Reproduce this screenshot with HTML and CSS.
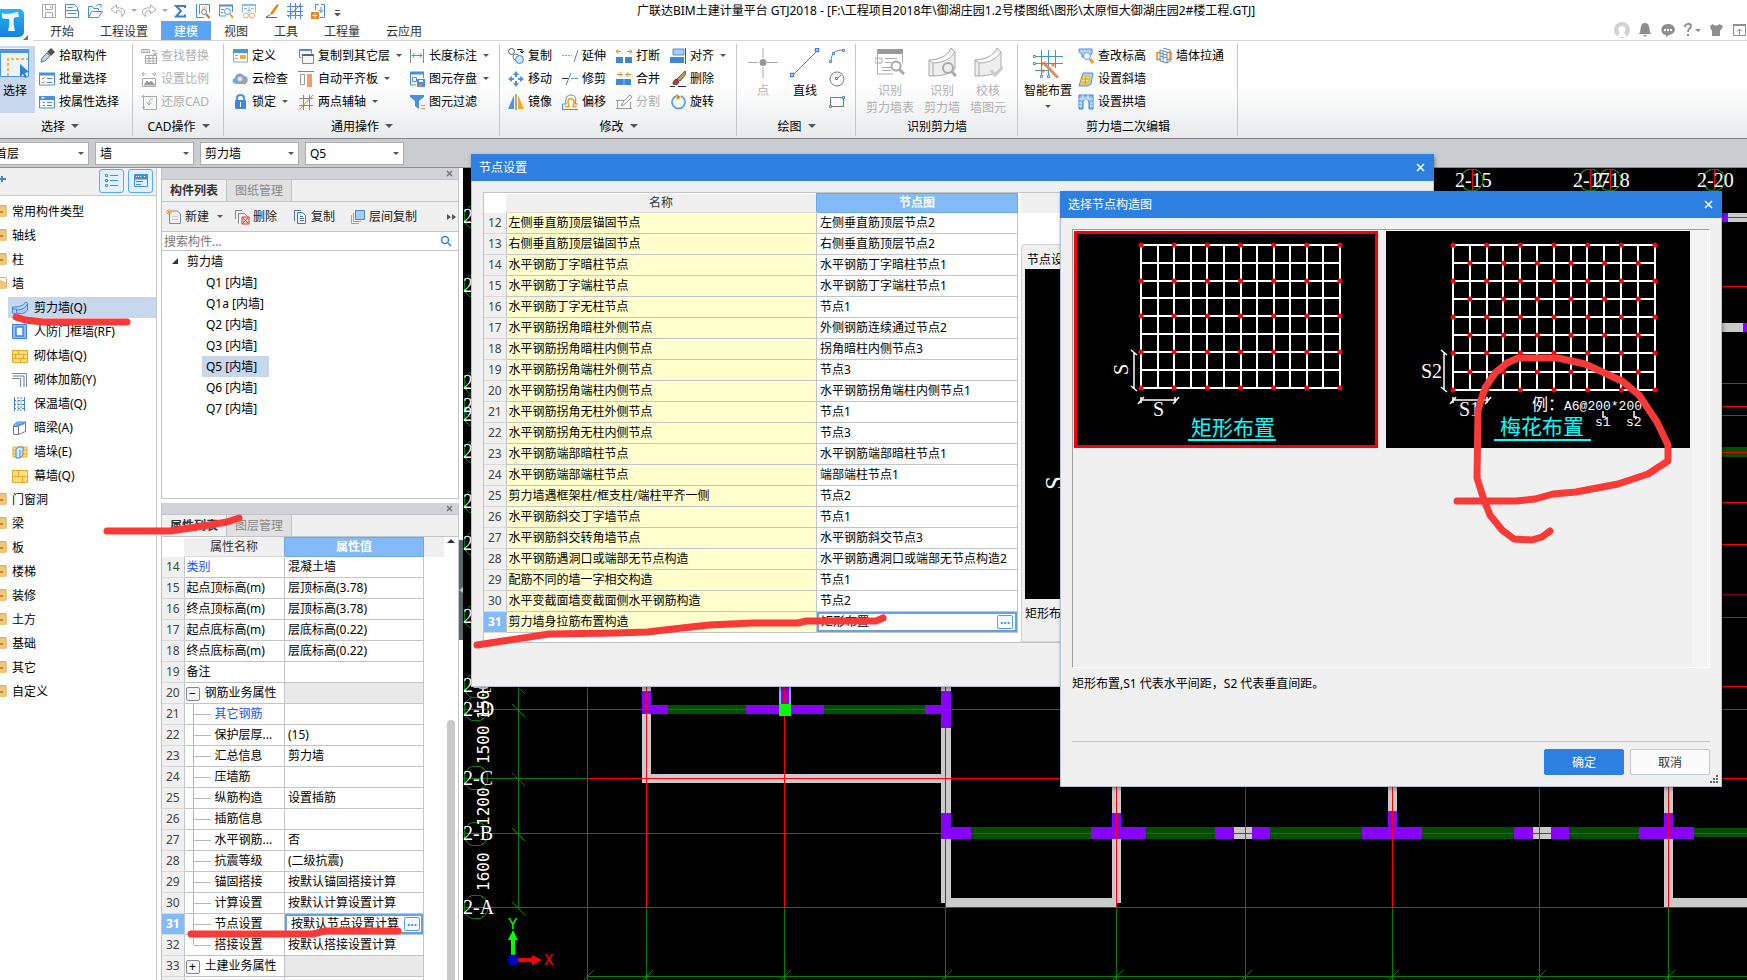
FILE: index.html
```html
<!DOCTYPE html>
<html lang="zh-CN">
<head>
  <meta charset="UTF-8">
  <title>广联达BIM土建计量平台 GTJ2018</title>
  <meta name="viewport" content="width=device-width, initial-scale=1.0">
  <link rel="stylesheet" href="styles.css">
</head>
<body>
<div class="app">

  <header class="titlebar">
    <div class="logo">
      <svg width="33" height="41" viewBox="0 0 33 41">
        <defs><linearGradient id="lg" x1="0" y1="0" x2="0" y2="1"><stop offset="0" stop-color="#27b4f5"/><stop offset="1" stop-color="#1580dd"/></linearGradient></defs>
        <rect x="-6" y="9" width="30" height="28" rx="5" fill="url(#lg)"/>
        <path d="M2 13c4 2 11 0 16-1l1 5c-2 0-4 0-5 1-1 4 0 8 1 13H8c1-5 2-9 1-12-2 0-5 0-7-1z" fill="#e9f7ff"/>
        <path d="M28 35v5h-5z" fill="#777"/>
      </svg>
    </div>
    <div class="title-main">
      <div class="title-row">
        <div class="quick">
          <button aria-label="保存"><svg width="16" height="16" viewBox="0 0 16 16" fill="none" stroke="#aaa"><path d="M1.500 1.500h13v13h-13zM4.500 1.500v5h7v-5M4.500 14.500v-5h7v5M9.500 3v2"/></svg></button>
          <button aria-label="另存"><svg width="16" height="16" viewBox="0 0 16 16" fill="none" stroke="#4a8fdc"><path d="M1.500 7V1.500h9l3 3V7M3.500 4.500h5M1.500 14.500v-7h13v7zM4 10.500h8"/></svg></button>
          <button aria-label="打开"><svg width="16" height="16" viewBox="0 0 16 16" fill="none" stroke="#4a8fdc"><path d="M1.500 14.500v-11h4l1 2h5v2M1.500 14.500l3-6h11l-4 6zM9 3.500l2-2h3v3"/></svg></button>
          <button aria-label="撤销" class="with-caret"><svg width="16" height="16" viewBox="0 0 16 16" fill="none" stroke="#aaa"><path d="M6.500 2L1 6.500l5.500 4V8c4-1 6 1 5 5.500C17 10 15 4 6.500 5z"/></svg><i class="caret light"></i></button>
          <button aria-label="恢复" class="with-caret"><svg width="16" height="16" viewBox="0 0 16 16" fill="none" stroke="#aaa"><path d="M9.500 2L15 6.500l-5.500 4V8c-4-1-6 1-5 5.500C-1 10 1 4 9.500 5z"/></svg><i class="caret light"></i></button>
          <button aria-label="汇总"><svg width="16" height="16" viewBox="0 0 16 16" fill="none" stroke="#3f7fd0" stroke-width="2"><path d="M13 5V3H4l5 5-5 5.500h9v-2"/></svg></button>
          <button aria-label="查量"><svg width="16" height="16" viewBox="0 0 16 16" fill="none" stroke="#4a8fdc"><path d="M1.500 1v13.500H9M4.500 11V1.500h10v8"/><path d="M7 4h6M7 6h6" stroke="#f08a3c" stroke-dasharray="1 1"/><circle cx="9" cy="9" r="2.500"/><path d="M11 11l3.500 4" stroke="#e07020" stroke-width="2"/></svg></button>
          <button aria-label="查看"><svg width="16" height="16" viewBox="0 0 16 16" fill="none" stroke="#4a8fdc"><path d="M1 2.500h14" stroke-width="2"/><path d="M1.500 2v11H8M14.500 3v6M3 6.500h3M3 9.500h2"/><circle cx="9.500" cy="8.500" r="3"/><path d="M12 11l3 4" stroke="#f0a020" stroke-width="2"/></svg></button>
          <button aria-label="云查"><svg width="16" height="16" viewBox="0 0 16 16" fill="none" stroke="#8db9e8"><path d="M1 2h14" stroke-width="2"/><path d="M1.500 2v8M14.500 3v7M3 5.500h3M10 5.500h3M8 4v6M6 7.500h4"/><g stroke="#f0a070"><circle cx="5" cy="12.500" r="2.500"/><circle cx="11" cy="12.500" r="2.500"/></g></svg></button>
          <button aria-label="画笔"><svg width="16" height="16" viewBox="0 0 16 16"><path d="M13 1l2 1-6 9-3 1 1-3z" fill="#f08020"/><path d="M2 14.500h11M2 14l4-2" stroke="#666"/></svg></button>
          <button aria-label="轴网"><svg width="16" height="16" viewBox="0 0 16 16" fill="none" stroke="#4a8fdc"><path d="M3.500 0v16M8.500 0v16M13.500 0v16M0 3.500h16M0 8.500h16M0 12.500h16M1 14L14 1"/></svg></button>
          <button aria-label="导入"><svg width="16" height="16" viewBox="0 0 16 16" fill="none" stroke="#4a8fdc"><path d="M5.500 7V1.500h3M11 1.500h3.500v13H10"/><path d="M11 4v5M9 7l2 2.500L13 7"/><path d="M1 9h8v7H1z" fill="#f08020" stroke="none"/><path d="M5 10v5M2.500 12.500h5" stroke="#fff"/></svg></button>
          <button aria-label="更多" class="more"><svg width="7" height="8" viewBox="0 0 7 8"><path d="M1 1.500h5" stroke="#555"/><path d="M0 4h7L3.500 7.500z" fill="#555"/></svg></button>
        </div>
        <h1 class="title">广联达BIM土建计量平台 GTJ2018 - [F:\工程项目2018年\御湖庄园1.2号楼图纸\图形\太原恒大御湖庄园2#楼工程.GTJ]</h1>
      </div>
      <div class="tab-row">
        <nav class="tabs">
          <a href="#">开始</a>
          <a href="#">工程设置</a>
          <a href="#" class="active">建模</a>
          <a href="#">视图</a>
          <a href="#">工具</a>
          <a href="#">工程量</a>
          <a href="#">云应用</a>
        </nav>
        <div class="user-icons">
          <svg width="16" height="16" viewBox="0 0 16 16"><circle cx="8" cy="8" r="8" fill="#d2d2d2"/><path d="M4 15c0-3 1-3 2-4-3-4-1-7 2-7s5 3 2 7c1 1 2 1 2 4z" fill="#fff"/></svg>
          <svg width="16" height="16" viewBox="0 0 16 16"><path d="M8 1c5 0 4 6 5 9l1 2H2l1-2C4 7 3 1 8 1zM6 13h4l-2 2z" fill="#8e8e8e"/></svg>
          <svg width="16" height="16" viewBox="0 0 16 16"><path d="M8 2c9 0 9 10 1 11l-3 2v-2C-1 12 0 2 8 2z" fill="#8e8e8e"/><path d="M4 7h2v2H4zM7 7h2v2H7zM10 7h2v2h-2z" fill="#fff"/></svg>
          <svg width="18" height="16" viewBox="0 0 18 16"><path d="M2 5c0-4 6-4 6-1 0 2-3 3-3 6" fill="none" stroke="#8e8e8e" stroke-width="2"/><path d="M4 12h2v2H4zM12 7h6l-3 3z" fill="#8e8e8e"/></svg>
          <svg width="16" height="16" viewBox="0 0 16 16"><path d="M2 4l3-2c1 2 5 2 6 0l4 2-2 4h-1v6H4V8H3z" fill="#8e8e8e"/></svg>
          <svg width="16" height="16" viewBox="0 0 16 16" fill="none" stroke="#8e8e8e"><path d="M2 3h13" stroke-width="2"/><path d="M2.500 3v10.500h12V3M8.500 13V7M6 9.500L8.500 7 11 9.500"/></svg>
        </div>
      </div>
    </div>
  </header>

  <div class="ribbon">
    <section class="group g-select">
      <div class="group-body">
        <button class="big active"><svg width="30" height="30" viewBox="0 0 30 30"><path d="M0 0h29v29H0z" fill="#eef3fb"/><path d="M0 1h29v4H0z" fill="#4a94e8"/><path d="M.5 1v27.500h28V1" fill="none" stroke="#4a94e8"/><path d="M8 28V11h20" fill="none" stroke="#f5b731" stroke-width="2" stroke-dasharray="3 2"/><path d="M20 16l9 8-4 1 2 4-2 1-2-4-3 3z" fill="#2f7fdc"/></svg>选择</button>
        <div class="tools">
          <button class="tool"><svg width="16" height="16" viewBox="0 0 16 16"><path d="M2 14l1-4 5-5 3 3-5 5z" fill="#bcd6f2" stroke="#777"/><path d="M8 4l4-4 4 4-4 4z" fill="#555"/></svg>拾取构件</button>
          <button class="tool"><svg width="16" height="16" viewBox="0 0 16 16" fill="none" stroke="#4a8fdc"><path d="M0 3h16" stroke-width="3"/><path d="M.5 3v11h15V3M8 7.500h5M8 11.500h5"/><path d="M3 7l1 1 2-2M3 11l1 1 2-2" stroke="#f08020"/></svg>批量选择</button>
          <button class="tool"><svg width="16" height="16" viewBox="0 0 16 16" fill="none" stroke="#4a8fdc"><path d="M0 4h16" stroke-width="4"/><path d="M.5 3v11h15V3M4 8.500h2M8 8.500h5M4 11.500h2M8 11.500h5"/><path d="M2 3h4L4 5z" fill="#fff" stroke="none"/></svg>按属性选择</button>
        </div>
      </div>
      <div class="group-label">选择<i class="caret wide"></i></div>
    </section>

    <section class="group g-cad">
      <div class="group-body tools">
        <button class="tool" disabled><svg width="16" height="16" viewBox="0 0 16 16" fill="none" stroke="#aaa"><path d="M.5 1.500h8v3h-8zM3 2v2M6 2v2M11 2.500h3V7M12 5l2 2 2-2M4.500 7.500h11v8h-11zM8 8v8M12 8v8M5 10.500h10M5 13h10"/></svg>查找替换</button>
        <button class="tool" disabled><svg width="16" height="16" viewBox="0 0 16 16" fill="none" stroke="#aaa"><path d="M1 3h4M3 1L1 3l2 2M15 3h-4M13 1l2 2-2 2M1.500 7.500h13v8h-13z"/><path d="M3 14l3-4 2 2 2-2 4 4z" fill="#999"/></svg>设置比例</button>
        <button class="tool" disabled><svg width="16" height="16" viewBox="0 0 16 16" fill="none" stroke="#aaa"><path d="M.5 2.500h15M2.500 1v14.500h13V2M1 13.500h3M12 5c-3 0-4 1-4 6M5.500 8.500L8 11l2.500-2.500"/></svg>还原CAD</button>
      </div>
      <div class="group-label">CAD操作<i class="caret wide"></i></div>
    </section>

    <section class="group g-common">
      <div class="group-body tools">
        <button class="tool"><svg width="16" height="16" viewBox="0 0 16 16" fill="none" stroke="#7fa8d6"><path d="M1.500 2v12h14V2"/><path d="M1 3h15" stroke="#4a94e8" stroke-width="4"/><path d="M3 7.500h3M3 10.500h3"/><path d="M8 7h6v4H8z" fill="#f6a93b" stroke="none"/></svg>定义</button>
        <button class="tool"><svg width="16" height="16" viewBox="0 0 16 16"><path d="M5 13c-5 0-6-5-2-6 0-5 7-6 9-2 5 0 5 8 0 8z" fill="#6ea9ea"/><circle cx="8" cy="8" r="2.500" fill="#dcecff" stroke="#f0a080"/><path d="M10 10l3 3" stroke="#f08a5c" stroke-width="2"/></svg>云检查</button>
        <button class="tool"><svg width="16" height="16" viewBox="0 0 16 16"><path d="M5 7V4c0-4 7-4 7 0v3" fill="none" stroke="#4a94e8" stroke-width="2"/><rect x="3" y="6" width="11" height="9" rx="1" fill="#3f86dd"/><path d="M8 8h1v5H8z" fill="#fff"/></svg>锁定<i class="caret"></i></button>
        <button class="tool"><svg width="16" height="16" viewBox="0 0 16 16" fill="none" stroke="#4a8fdc"><path d="M3.500 9.500h-2v-8h12v4M1 2.500h13"/><path d="M4.500 6.500h11v9h-11z" fill="#f4f4f4" stroke="#888"/><path d="M4 7h12" stroke="#666" stroke-width="2"/></svg>复制到其它层<i class="caret"></i></button>
        <button class="tool"><svg width="16" height="16" viewBox="0 0 16 16"><path d="M0 .5h16" stroke="#4a8fdc"/><path d="M2.500 3.500h4v10h-4z" fill="#fff" stroke="#999"/><path d="M9 3h5v13H9z" fill="#ff9a6b"/></svg>自动平齐板<i class="caret"></i></button>
        <button class="tool"><svg width="16" height="16" viewBox="0 0 16 16" fill="none" stroke="#888"><path d="M5.500 1v15M11.500 1v15M1 4.500h14M1 11.500h14"/><path d="M2 15L15 1" stroke="#e08040"/></svg>两点辅轴<i class="caret"></i></button>
        <button class="tool"><svg width="16" height="16" viewBox="0 0 16 16" fill="none"><path d="M1.500 1v14M14.500 1v14" stroke="#888"/><path d="M3 7.500h10M5.500 5L3 7.500 5.500 10M10.500 5L13 7.500 10.500 10" stroke="#4a8fdc"/></svg>长度标注<i class="caret"></i></button>
        <button class="tool"><svg width="16" height="16" viewBox="0 0 16 16" fill="none" stroke="#4a8fdc"><path d="M1 2h14" stroke-width="3"/><path d="M1.500 2v12H7M14.500 2v5M3.500 6.500h4v4h-4z"/><path d="M8 8h8v8H8z" fill="#4a8fdc" stroke="none"/><path d="M10 9h4v2h-4z" fill="#fff" stroke="none"/><path d="M10 13h3v3h-3z" fill="#f08020" stroke="none"/></svg>图元存盘<i class="caret"></i></button>
        <button class="tool"><svg width="16" height="16" viewBox="0 0 16 16"><path d="M1 1h14v2l-5 4v8l-4-3V7L1 3z" fill="#4a8fdc"/><path d="M12 11.500h4M12 14.500h4" stroke="#f08a3c"/></svg>图元过滤</button>
      </div>
      <div class="group-label">通用操作<i class="caret wide"></i></div>
    </section>

    <section class="group g-modify">
      <div class="group-body tools">
        <button class="tool"><svg width="16" height="16" viewBox="0 0 16 16" fill="none" stroke="#555"><circle cx="3.500" cy="3.500" r="3"/><circle cx="8" cy="9" r="3" stroke="#777"/><circle cx="11.500" cy="11.500" r="4" stroke="#3f86dd" fill="#cfe3fa"/><path d="M9 1.500h5V5M12 3l2 2 2-2" stroke="#222"/></svg>复制</button>
        <button class="tool"><svg width="16" height="16" viewBox="0 0 16 16" fill="#4a94e8"><path d="M8 0l3 4H5zM8 16l-3-4h6zM0 8l4-3v6zM16 8l-4 3V5z"/><path d="M7 4h2v2H7zM7 10h2v2H7zM4 7h2v2H4zM10 7h2v2h-2z"/></svg>移动</button>
        <button class="tool"><svg width="16" height="16" viewBox="0 0 16 16"><path d="M6 1v14H0z" fill="#4a94e8"/><path d="M10 1v14h6z" fill="#f6a91b"/><path d="M8 0v16" stroke="#555"/></svg>镜像</button>
        <button class="tool"><svg width="16" height="16" viewBox="0 0 16 16"><path d="M0 7.500h10" stroke="#8aa6c4" stroke-dasharray="2 1"/><path d="M16 2l-4 12" stroke="#3f86dd"/></svg>延伸</button>
        <button class="tool"><svg width="16" height="16" viewBox="0 0 16 16"><path d="M0 7.500h6" stroke="#333"/><path d="M9 7.500h7" stroke="#3f86dd" stroke-dasharray="3 1"/><path d="M9 2L4 14" stroke="#3f86dd"/></svg>修剪</button>
        <button class="tool"><svg width="16" height="16" viewBox="0 0 16 16" fill="none"><path d="M0 15.500h16M.5 15v-5H4C3 4 5 1 9 1s6 3 4 9h3" stroke="#4a8fdc"/><path d="M3 12.500h4c-2-5-1-8 2-8s4 3 2 8h4" stroke="#f0a020" stroke-width="1.500"/></svg>偏移</button>
        <button class="tool"><svg width="16" height="16" viewBox="0 0 16 16"><path d="M0 9h7v6H0zM9 9h7v6H9z" fill="#3f86dd"/><path d="M0 3.500h5M2.500 1L0 3.500 2.500 6M16 3.500h-5M13.500 1L16 3.500 13.500 6" fill="none" stroke="#e8821e"/></svg>打断</button>
        <button class="tool"><svg width="16" height="16" viewBox="0 0 16 16"><path d="M0 8h15v6H0z" fill="#3f86dd"/><path d="M8 8v6" stroke="#9cc4f3"/><path d="M1 3.500h5M3.500 1L6 3.500 3.500 6M15 3.500h-5M12.500 1L10 3.500 12.500 6" fill="none" stroke="#e8821e"/></svg>合并</button>
        <button class="tool" disabled><svg width="16" height="16" viewBox="0 0 16 16" fill="none" stroke="#999"><path d="M0 6.500h8M0 14.500h16M1.500 6v9M14.500 8v7M5 12l2-4 7-7 2 2-7 7z"/></svg>分割</button>
        <button class="tool"><svg width="16" height="16" viewBox="0 0 16 16"><path d="M3 1h11v6H3z" fill="#a9ccf5" stroke="#4a8fdc"/><path d="M0 9h14v6H0z" fill="#3f86dd"/><path d="M15.500 0v16" stroke="#555"/></svg>对齐<i class="caret"></i></button>
        <button class="tool"><svg width="16" height="16" viewBox="0 0 16 16"><path d="M15 0l1 3-6 7-3-2z" fill="#c79a62" stroke="#555"/><path d="M6 8l3 3c-1 3-4 3-6 2 0-2 1-4 3-5z" fill="#c0392b" stroke="#444"/><path d="M0 15.500h5M8 15.500h8" stroke="#333"/></svg>删除</button>
        <button class="tool"><svg width="16" height="16" viewBox="0 0 16 16"><path d="M6 2a6.500 6.500 0 1 0 5 0" fill="none" stroke="#4a94e8" stroke-width="1.500"/><path d="M6 0l5 3-4 3z" fill="#e8821e"/></svg>旋转</button>
      </div>
      <div class="group-label">修改<i class="caret wide"></i></div>
    </section>

    <section class="group g-draw">
      <div class="group-body">
        <button class="big" disabled><svg width="30" height="30" viewBox="0 0 30 30"><path d="M15 0v10M15 19v11M0 14.500h10M19 14.500h11" stroke="#aaa"/><circle cx="15" cy="14.500" r="3.500" fill="#999"/></svg>点</button>
        <button class="big"><svg width="30" height="30" viewBox="0 0 30 30" fill="#fff"><path d="M2 28L28 2" stroke="#777"/><path d="M.5 25.500h3v3h-3zM25.500.5h3v3h-3z" stroke="#3f86dd" stroke-width="1.500"/></svg>直线</button>
        <div class="tools">
          <button class="tool" aria-label="弧线"><svg width="16" height="16" viewBox="0 0 16 16" fill="none"><path d="M2 14C2 5 6 2 14 2" stroke="#777"/><path d="M.5 12.500h2v2h-2zM3.500 4.500h2v2h-2zM13.500 1.500h2v2h-2z" stroke="#3f86dd" fill="#fff"/></svg></button>
          <button class="tool" aria-label="圆"><svg width="16" height="16" viewBox="0 0 16 16" fill="none"><circle cx="8" cy="8" r="7" stroke="#777"/><path d="M8 8l4-4" stroke="#777"/><path d="M6.500 6.500h2v2h-2z" stroke="#3f86dd" fill="#fff"/></svg></button>
          <button class="tool" aria-label="矩形"><svg width="16" height="16" viewBox="0 0 16 16" fill="none"><path d="M1.500 3.500h13v9h-13z" stroke="#777"/><path d="M.5 11.500h2v2h-2zM13.500 2.500h2v2h-2z" stroke="#3f86dd" fill="#fff"/></svg></button>
        </div>
      </div>
      <div class="group-label">绘图<i class="caret wide"></i></div>
    </section>

    <section class="group g-identify">
      <div class="group-body">
        <button class="big" disabled><svg width="30" height="30" viewBox="0 0 30 30" fill="none" stroke="#aaa"><path d="M2 3.500h26" stroke="#999" stroke-width="5"/><path d="M2.500 3v23H18M27.500 3v12M0 10h7v5H0zM10 10.500h12M10 14.500h6M7 19.500h9M7 22.500h9"/><circle cx="21" cy="18" r="4.500" stroke-width="2"/><path d="M24 21l5 5" stroke-width="3"/></svg>识别<br>剪力墙表</button>
        <button class="big" disabled><svg width="30" height="30" viewBox="0 0 30 30" fill="#eee" stroke="#aaa"><path d="M2 12c9 0 18-3 22-12l4 4v17c-6 6-15 7-26 7zM2 12l4 3c8 0 17-3 22-11M6 15v13"/><circle cx="21" cy="20" r="5" stroke-width="2"/><path d="M24 23l5 5" stroke-width="3"/></svg>识别<br>剪力墙</button>
        <button class="big" disabled><svg width="30" height="30" viewBox="0 0 30 30" fill="#eee" stroke="#aaa"><path d="M2 12c9 0 18-3 22-12l4 4v17c-6 6-15 7-26 7zM2 12l4 3c8 0 17-3 22-11M6 15v13"/><path d="M18 22l4 5 8-8" fill="none" stroke="#ccc" stroke-width="3"/></svg>校核<br>墙图元</button>
      </div>
      <div class="group-label">识别剪力墙</div>
    </section>

    <section class="group g-wall">
      <div class="group-body">
        <button class="big"><svg width="30" height="30" viewBox="0 0 30 30" fill="none" stroke="#4a8fdc"><path d="M8.500 2v25M15.500 2v25M22.500 2v18M2 8.500h28M2 15.500h28M2 22.500h14"/><path d="M.5 7.500h2v2h-2zM.5 14.500h2v2h-2zM7.500 27.500h2v2h-2zM14.500 27.500h2v2h-2z" fill="#fff"/><path d="M12 16l13 14" stroke="#d9935a" stroke-width="3"/><path d="M8 13l5 5M13 13l-5 5M20 15v4M18 17h4M10 21v4M8 23h4" stroke="#ee6a2a"/></svg>智能布置<i class="caret"></i></button>
        <div class="tools">
          <button class="tool"><svg width="16" height="16" viewBox="0 0 16 16"><path d="M1 1h13v5l-4 3H4V6L1 4z" fill="#b5d3f6" stroke="#4a8fdc"/><circle cx="9" cy="8" r="3.500" fill="#eaf3ff" stroke="#6ea0d8"/><path d="M12 11l3 4" stroke="#f0a020" stroke-width="3"/></svg>查改标高</button>
          <button class="tool"><svg width="16" height="16" viewBox="0 0 16 16"><path d="M5 2h10l-2 11-3 2H1z" fill="#b5d3f6" stroke="#4a8fdc"/><path d="M5 5h7l-2 8H2z" fill="#ffe48a" stroke="#f0b020"/><path d="M4 8h7M3 11h7M8 5l-1 8" stroke="#d89a10"/></svg>设置斜墙</button>
          <button class="tool"><svg width="16" height="16" viewBox="0 0 16 16"><path d="M1 1h14v14h-4V9c0-5-6-5-6 0v6H1z" fill="#8dbdf2" stroke="#3f86dd"/><path d="M1 5h14M1 9h3M12 9h3M1 12h3M12 12h3M5 1v4M10 1v4" stroke="#e8f2ff"/></svg>设置拱墙</button>
          <button class="tool"><svg width="16" height="16" viewBox="0 0 16 16" fill="none" stroke="#4a8fdc"><path d="M4 2l7 2v11l-7-2zM7 0l7 2v11l-3 2M4 5l7 2M4 8l7 2M7 3v11"/><path d="M5 4.500H1v7h4M11 4.500h4v7h-4" stroke="#f08020" stroke-width="1.500"/></svg>墙体拉通</button>
        </div>
      </div>
      <div class="group-label">剪力墙二次编辑</div>
    </section>
  </div>

  <div class="filters">
    <span class="combo"><select aria-label="楼层"><option>首层</option></select><i class="caret"></i></span>
    <span class="combo"><select aria-label="构件大类"><option>墙</option></select><i class="caret"></i></span>
    <span class="combo"><select aria-label="构件类型"><option>剪力墙</option></select><i class="caret"></i></span>
    <span class="combo"><select aria-label="构件"><option>Q5</option></select><i class="caret"></i></span>
  </div>

  <main class="workspace">
    <aside class="navigator">
      <div class="nav-bar">
        <svg class="plus" width="6" height="8" viewBox="0 0 6 8"><path d="M0 4h6M2 1v6" stroke="#3f86dd" stroke-width="2"/></svg>
        <button aria-label="列表"><svg width="16" height="16" viewBox="0 0 16 16" fill="none" stroke="#3f8fe8"><path d="M1.500 1.500h2v2h-2zM1.500 6.500h2v2h-2zM1.500 11.500h2v2h-2zM6 2.500h8M6 7.500h8M6 12.500h8"/></svg></button>
        <button aria-label="窗口"><svg width="16" height="16" viewBox="0 0 16 16" fill="none" stroke="#3f8fe8"><path d="M1.500 1.500h13v12h-13z"/><path d="M1 4h14" stroke-width="5"/><path d="M3 3.500h5M11 3.500h2" stroke="#fff" stroke-dasharray="1 1"/><path d="M3 8.500h7M3 11.500h5"/></svg></button>
      </div>
      <ul class="nav-list">
        <li><a href="#"><i class="folder"></i>常用构件类型</a></li>
        <li><a href="#"><i class="folder"></i>轴线</a></li>
        <li><a href="#"><i class="folder"></i>柱</a></li>
        <li><a href="#"><i class="folder open"></i>墙</a>
          <ul>
            <li><a href="#" class="active"><svg width="16" height="16" viewBox="0 0 16 16" fill="#a8cdf5" stroke="#3f86dd"><path d="M.5 7c6 0 11-1 13-5l2 1v7c-3 4-6 4-11 3v-4L.5 9zM.5 7v6l4 1M4.500 10c5 0 9-2 11-6"/></svg>剪力墙(Q)</a></li>
            <li><a href="#"><svg width="16" height="16" viewBox="0 0 16 16"><path d="M.5.5h14v14H.500z" fill="#8dbdf2" stroke="#3f86dd"/><path d="M4 3h7v9H4z" fill="#fff" stroke="#3f86dd" stroke-width="1.500"/></svg>人防门框墙(RF)</a></li>
            <li><a href="#"><svg width="16" height="16" viewBox="0 0 16 16" fill="#ffe08a" stroke="#f0a81c"><path d="M.5 2.500h15v12H.500zM0 6.500h16M0 10.500h16M6.500 2v4M11.500 6v4M3.500 6v4M8.500 10v4"/></svg>砌体墙(Q)</a></li>
            <li><a href="#"><svg width="16" height="16" viewBox="0 0 16 16" fill="none"><path d="M0 1.500h14.500V15M0 6.500h8.500V15" stroke="#888"/><path d="M1 4h11v11" stroke="#3f86dd"/></svg>砌体加筋(Y)</a></li>
            <li><a href="#"><svg width="16" height="16" viewBox="0 0 16 16" fill="none" stroke="#3f86dd"><path d="M2.500 1v14M12.500 1v14"/><path d="M6 1v14M9 1v14" stroke-dasharray="2 1"/><path d="M2 4.500h11M2 8.500h11M2 12.500h11" stroke-dasharray="2 2"/></svg>保温墙(Q)</a></li>
            <li><a href="#"><svg width="16" height="16" viewBox="0 0 16 16" fill="none"><path d="M1.500 6.500h5v8h-5zM6.500 14.500l7-3v-9" stroke="#777"/><path d="M1 6l4-4h9L7 6zM8 4l-2 2M4 4h8" fill="#b5d3f6" stroke="#3f86dd"/></svg>暗梁(A)</a></li>
            <li><a href="#"><svg width="16" height="16" viewBox="0 0 16 16"><path d="M1 3h14v10H1z" fill="#ffe08a" stroke="#f0a81c"/><path d="M1 6h14M1 10h14" stroke="#f0a81c"/><path d="M4 5l3-2h4v8l-3 3H4z" fill="#d7e8fb" stroke="#3f86dd"/><path d="M8 6v8" stroke="#3f86dd"/></svg>墙垛(E)</a></li>
            <li><a href="#"><svg width="16" height="16" viewBox="0 0 16 16" fill="#ffe08a" stroke="#f0a81c"><path d="M.5 2.500h15v12H.500zM0 8.500h16M6.500 2v6M10.500 8v6"/></svg>幕墙(Q)</a></li>
          </ul>
        </li>
        <li><a href="#"><i class="folder"></i>门窗洞</a></li>
        <li><a href="#"><i class="folder"></i>梁</a></li>
        <li><a href="#"><i class="folder"></i>板</a></li>
        <li><a href="#"><i class="folder"></i>楼梯</a></li>
        <li><a href="#"><i class="folder"></i>装修</a></li>
        <li><a href="#"><i class="folder"></i>土方</a></li>
        <li><a href="#"><i class="folder"></i>基础</a></li>
        <li><a href="#"><i class="folder"></i>其它</a></li>
        <li><a href="#"><i class="folder"></i>自定义</a></li>
      </ul>
    </aside>

    <div class="panels">
      <section class="panel components">
        <div class="panel-head"><button aria-label="关闭"><svg width="7" height="7" viewBox="0 0 7 7"><path d="M1 1l5 5M6 1L1 6" stroke="#777" stroke-width="1.500"/></svg></button></div>
        <div class="panel-tabs"><button class="active">构件列表</button><button>图纸管理</button></div>
        <div class="panel-tools">
          <button><svg width="16" height="16" viewBox="0 0 16 16" fill="none"><path d="M3.500 4v10.500h11V5l-3-3H5" stroke="#888"/><path d="M6 7.500h6M6 10.500h6" stroke="#ccc"/><path d="M1 1l4 4M5 1L1 5M3 0v6M0 3h6" stroke="#f0a030"/></svg>新建<i class="caret"></i></button>
          <button><svg width="16" height="16" viewBox="0 0 16 16" fill="none" stroke="#888"><path d="M1.500 10V1.500H8M4.500 14.500v-10h6l3 3"/><path d="M8 8h7v7H8z" fill="#ffd5d5" stroke="#d33"/><path d="M9 9l5 5M14 9l-5 5" stroke="#d33"/></svg>删除</button>
          <button><svg width="16" height="16" viewBox="0 0 16 16" fill="none" stroke="#4a78b0"><path d="M2.500 12V1.500H9M5.500 14.500v-11h5l3 3v8zM8 7.500h3M8 9.500h4M8 11.500h4"/></svg>复制</button>
          <button><svg width="16" height="16" viewBox="0 0 16 16" fill="none"><path d="M1.500 6v8.500H9M3.500 4v8.500H11" stroke="#f08a4c"/><path d="M5.500 1.500h9v9h-9z" fill="#a9ccf5" stroke="#3f86dd"/></svg>层间复制</button>
          <svg class="overflow" width="9" height="8" viewBox="0 0 9 8"><path d="M0 1l4 3-4 3zM5 1l4 3-4 3z" fill="#555"/></svg>
        </div>
        <label class="search"><input type="text" placeholder="搜索构件..." aria-label="搜索构件"><svg width="12" height="12" viewBox="0 0 12 12" fill="none" stroke="#2b87d0" stroke-width="1.500"><circle cx="5" cy="5" r="3.500"/><path d="M8 8l3 3"/></svg></label>
        <ul class="tree">
          <li class="root"><svg width="7" height="7" viewBox="0 0 7 7"><path d="M6 0v6H0z" fill="#333"/></svg>剪力墙</li>
          <li><span>Q1 [内墙]</span></li>
          <li><span>Q1a [内墙]</span></li>
          <li><span>Q2 [内墙]</span></li>
          <li><span>Q3 [内墙]</span></li>
          <li><span class="active">Q5 [内墙]</span></li>
          <li><span>Q6 [内墙]</span></li>
          <li><span>Q7 [内墙]</span></li>
        </ul>
      </section>

      <section class="panel properties">
        <div class="panel-head"><button aria-label="关闭"><svg width="7" height="7" viewBox="0 0 7 7"><path d="M1 1l5 5M6 1L1 6" stroke="#777" stroke-width="1.500"/></svg></button></div>
        <div class="panel-tabs"><button class="active">属性列表</button><button>图层管理</button></div>
        <div class="prop-scroll">
          <div class="prop-area">
            <table class="grid props">
              <thead><tr><th class="num"></th><th>属性名称</th><th class="sel">属性值</th></tr></thead>
              <tbody>
                <tr><td class="num">14</td><td class="link">类别</td><td>混凝土墙</td></tr>
                <tr><td class="num">15</td><td>起点顶标高(m)</td><td>层顶标高(3.78)</td></tr>
                <tr><td class="num">16</td><td>终点顶标高(m)</td><td>层顶标高(3.78)</td></tr>
                <tr><td class="num">17</td><td>起点底标高(m)</td><td>层底标高(0.22)</td></tr>
                <tr><td class="num">18</td><td>终点底标高(m)</td><td>层底标高(0.22)</td></tr>
                <tr><td class="num">19</td><td>备注</td><td></td></tr>
                <tr><td class="num">20</td><td class="parent"><button class="toggle">−</button>钢筋业务属性</td><td class="blank"></td></tr>
                <tr><td class="num">21</td><td class="child link">其它钢筋</td><td></td></tr>
                <tr><td class="num">22</td><td class="child">保护层厚...</td><td>(15)</td></tr>
                <tr><td class="num">23</td><td class="child">汇总信息</td><td>剪力墙</td></tr>
                <tr><td class="num">24</td><td class="child">压墙筋</td><td></td></tr>
                <tr><td class="num">25</td><td class="child">纵筋构造</td><td>设置插筋</td></tr>
                <tr><td class="num">26</td><td class="child">插筋信息</td><td></td></tr>
                <tr><td class="num">27</td><td class="child">水平钢筋...</td><td>否</td></tr>
                <tr><td class="num">28</td><td class="child">抗震等级</td><td>(二级抗震)</td></tr>
                <tr><td class="num">29</td><td class="child">锚固搭接</td><td>按默认锚固搭接计算</td></tr>
                <tr><td class="num">30</td><td class="child">计算设置</td><td>按默认计算设置计算</td></tr>
                <tr class="current"><td class="num">31</td><td class="child">节点设置</td><td class="edit"><div>按默认节点设置计算<button class="dots" aria-label="更多">···</button></div></td></tr>
                <tr><td class="num">32</td><td class="child last">搭接设置</td><td>按默认搭接设置计算</td></tr>
                <tr><td class="num">33</td><td class="parent"><button class="toggle">+</button>土建业务属性</td><td class="blank"></td></tr>
                <tr><td class="num"></td><td></td><td></td></tr>
              </tbody>
            </table>
          </div>
          <div class="scrollbar"><svg width="8" height="4" viewBox="0 0 8 4"><path d="M0 4l4-4 4 4z" fill="#333"/></svg><span class="thumb"></span></div>
        </div>
      </section>
    </div>

    <div class="splitter"><button aria-label="收起"><svg width="4" height="6" viewBox="0 0 4 6"><path d="M4 0v6L0 3z" fill="#b9c0c7"/></svg></button></div>

    <section class="canvas">
      <svg class="drawing" viewBox="463 168 1284 812" preserveAspectRatio="xMinYMin slice" shape-rendering="crispEdges">
        <!-- walls -->
        <g fill="#cacaca">
          <path d="M642 680h9v94h290V680h10v223h-6v-5h167V786h9v117h-5v5H945v-5h-4V783H642z"/>
          <path d="M951 680v218h161V786H951z" fill="#000"/>
          <path d="M1388 780h9v32h-9zM1664 780h9v118h74v10h-83zM1722 213h25v9h-25zM1722 323h21v9h-21z"/>
        </g>
        <g fill="#005000">
          <path d="M651 705h290v9H651zM951 827h743v12H951zM1694 828h53v9h-53zM1722 447h25v10h-25z"/>
        </g>
        <g fill="#cacaca"><path d="M1234 827h18v12h-18zM1533 827h18v12h-18z"/></g>
        <g fill="#8800ff">
          <path d="M642 691h9v14h17v9h-26zM746 705h78v9h-78zM925 705h16v-14h10v37h-10v-14h-16z"/>
          <path d="M941 813h10v14h20v12h-30zM1091 827h21v-14h9v14h25v12h-55zM1215 827h19v12h-19zM1252 827h18v12h-18z"/>
          <path d="M1362 827h26v-16h9v16h25v12h-60zM1514 827h19v12h-19zM1551 827h18v12h-18zM1639 827h25v-14h9v14h21v12h-55z"/>
          <path d="M1722 213h6v9h-6zM1743 323h4v9h-4z"/>
        </g>
        <path d="M779 680h12v26h-12z" fill="#8ab4ff"/>
        <path d="M781 680h8v26h-8z" fill="#8800ff"/>
        <!-- axis net -->
        <g stroke="#f00" fill="none">
          <path d="M587.500 680v228M646.500 680v228M784.500 680v228M945.500 680v228M1116.500 780v128M1245.500 780v128M1392.500 780v128M1539.500 780v128M1668.500 780v128"/>
          <path d="M587 709.500h1160M587 778.500h1160M587 833.500h1160M587 907.500h1160"/>
          <path d="M1722 217.500h25M1722 286.500h25M1722 383.500h25M1722 406.500h25M1722 415.500h25M1722 452.500h25M1722 502.500h25M1722 544.500h25M1722 617.500h25M1722 686.500h25"/>
          <path d="M1722 594.500h25" stroke="#800000"/>
          <path d="M1472.500 169v22M1590.500 169v22M1610.500 169v22M1714.500 169v22"/>
        </g>
        <path d="M779 704h12v12h-12z" fill="#0f0"/>
        <g stroke="#008000" fill="none">
          <path d="M463 709.500h124M463 778.500h124M463 833.500h124M463 907.500h124M518.500 680v228"/>
          <path d="M587.500 908v72M646.500 908v72M784.500 908v72M945.500 908v72M1116.500 908v72M1245.500 908v72M1392.500 908v72M1539.500 908v72M1668.500 908v72M587 976.500h1160"/>
          <path d="M518 687l7 7M512 704l13 13M512 773l13 13M512 828l13 13M512 902l13 13"/>
          <path d="M584 980l10-10M643 980l10-10M781 980l10-10M942 980l10-10M1113 980l10-10M1242 980l10-10M1389 980l10-10M1536 980l10-10M1665 980l10-10"/>
          <circle cx="476" cy="217" r="12"/><circle cx="476" cy="286" r="12"/><circle cx="476" cy="383" r="12"/><circle cx="476" cy="406" r="12"/><circle cx="476" cy="415" r="12"/><circle cx="476" cy="452" r="12"/><circle cx="476" cy="502" r="12"/><circle cx="476" cy="544" r="12"/><circle cx="476" cy="617" r="12"/><circle cx="476" cy="686" r="12"/>
          <circle cx="476" cy="709" r="12"/><circle cx="476" cy="778" r="12"/><circle cx="476" cy="834" r="12"/><circle cx="476" cy="907" r="12"/>
          <circle cx="1472" cy="180" r="11"/><circle cx="1590" cy="180" r="11"/><circle cx="1610" cy="180" r="11"/><circle cx="1714" cy="180" r="11"/>
        </g>
        <g class="axis-text">
          <text x="1455" y="187">2-15</text><text x="1573" y="187">2-17</text><text x="1593" y="187">2-18</text><text x="1697" y="187">2-20</text>
          <text x="463" y="223">2</text><text x="463" y="292">2</text><text x="463" y="389">2</text><text x="463" y="412">2</text><text x="463" y="421">2</text><text x="463" y="458">2</text><text x="463" y="508">2</text><text x="463" y="550">2</text><text x="463" y="623">2</text>
          <text x="463" y="692">2-E</text><text x="463" y="716">2-D</text><text x="463" y="785">2-C</text><text x="463" y="840">2-B</text><text x="463" y="914">2-A</text>
        </g>
        <g class="dim-text">
          <text transform="translate(489 719) rotate(-90)">1500</text>
          <text transform="translate(489 764) rotate(-90)">1500</text>
          <text transform="translate(489 826) rotate(-90)">1200</text>
          <text transform="translate(489 891) rotate(-90)">1600</text>
        </g>
        <!-- UCS icon -->
        <g shape-rendering="auto">
          <path d="M511 958v-18h-3l5-10 5 10h-3v18z" fill="#0f0"/>
          <path d="M516 958h16v-3l10 5-10 5v-3h-16z" fill="#f00"/>
          <circle cx="513" cy="960" r="5.500" fill="#0000c8"/>
          <text class="ucs" x="508" y="929" fill="#0f0">Y</text>
          <text class="ucs" x="544" y="965" fill="#f00">X</text>
        </g>
      </svg>
    </section>
  </main>
</div>

<section class="dialog node-settings">
  <header><h2>节点设置</h2><button aria-label="关闭"><svg width="9" height="9" viewBox="0 0 9 9"><path d="M1 1l7 7M8 1L1 8" stroke="#fff" stroke-width="1.500"/></svg></button></header>
  <div class="node-body">
    <div class="node-table">
      <table class="grid nodes">
        <thead><tr><th class="num"></th><th>名称</th><th class="sel">节点图</th></tr></thead>
        <tbody>
          <tr><td class="num">12</td><td>左侧垂直筋顶层锚固节点</td><td>左侧垂直筋顶层节点2</td></tr>
          <tr><td class="num">13</td><td>右侧垂直筋顶层锚固节点</td><td>右侧垂直筋顶层节点2</td></tr>
          <tr><td class="num">14</td><td>水平钢筋丁字暗柱节点</td><td>水平钢筋丁字暗柱节点1</td></tr>
          <tr><td class="num">15</td><td>水平钢筋丁字端柱节点</td><td>水平钢筋丁字端柱节点1</td></tr>
          <tr><td class="num">16</td><td>水平钢筋丁字无柱节点</td><td>节点1</td></tr>
          <tr><td class="num">17</td><td>水平钢筋拐角暗柱外侧节点</td><td>外侧钢筋连续通过节点2</td></tr>
          <tr><td class="num">18</td><td>水平钢筋拐角暗柱内侧节点</td><td>拐角暗柱内侧节点3</td></tr>
          <tr><td class="num">19</td><td>水平钢筋拐角端柱外侧节点</td><td>节点3</td></tr>
          <tr><td class="num">20</td><td>水平钢筋拐角端柱内侧节点</td><td>水平钢筋拐角端柱内侧节点1</td></tr>
          <tr><td class="num">21</td><td>水平钢筋拐角无柱外侧节点</td><td>节点1</td></tr>
          <tr><td class="num">22</td><td>水平钢筋拐角无柱内侧节点</td><td>节点3</td></tr>
          <tr><td class="num">23</td><td>水平钢筋端部暗柱节点</td><td>水平钢筋端部暗柱节点1</td></tr>
          <tr><td class="num">24</td><td>水平钢筋端部端柱节点</td><td>端部端柱节点1</td></tr>
          <tr><td class="num">25</td><td>剪力墙遇框架柱/框支柱/端柱平齐一侧</td><td>节点2</td></tr>
          <tr><td class="num">26</td><td>水平钢筋斜交丁字墙节点</td><td>节点1</td></tr>
          <tr><td class="num">27</td><td>水平钢筋斜交转角墙节点</td><td>水平钢筋斜交节点3</td></tr>
          <tr><td class="num">28</td><td>水平钢筋遇洞口或端部无节点构造</td><td>水平钢筋遇洞口或端部无节点构造2</td></tr>
          <tr><td class="num">29</td><td>配筋不同的墙一字相交构造</td><td>节点1</td></tr>
          <tr><td class="num">30</td><td>水平变截面墙变截面侧水平钢筋构造</td><td>节点2</td></tr>
          <tr class="current"><td class="num">31</td><td>剪力墙身拉筋布置构造</td><td class="edit"><div>矩形布置<button class="dots" aria-label="更多">···</button></div></td></tr>
        </tbody>
      </table>
    </div>
    <div class="node-preview">
      <fieldset>
        <legend>节点设置示意图</legend>
        <svg class="preview" viewBox="0 0 390 330" preserveAspectRatio="xMinYMin slice"><text transform="translate(38 218) rotate(-90)">S</text></svg>
        <p>矩形布置</p>
      </fieldset>
    </div>
  </div>
</section>

<section class="dialog node-picker">
  <header><h2>选择节点构造图</h2><button aria-label="关闭"><svg width="9" height="9" viewBox="0 0 9 9"><path d="M1 1l7 7M8 1L1 8" stroke="#fff" stroke-width="1.500"/></svg></button></header>
  <div class="picker-body">
    <div class="picker-list">
      <svg class="figure" width="304" height="217" viewBox="0 0 304 217" fill="none">
        <path d="M0 0h304v217H0z" fill="#000"/>
        <path d="M67 13v145M84 13v145M100 13v145M117 13v145M133 13v145M150 13v145M167 13v145M183 13v145M200 13v145M216 13v145M233 13v145M249 13v145M266 13v145M67 14h199M67 32h199M67 50h199M67 67h199M67 85h199M67 103h199M67 121h199M67 139h199M67 157h199" stroke="#fff" stroke-width="2" shape-rendering="crispEdges"/>
        <path d="M67 14h200M67 50h200M67 85h200M67 121h200M67 157h200" stroke="#f00" stroke-width="5" stroke-linecap="round" stroke-dasharray="0 33.170"/>
        <path d="M60 121v37M67 169h35M57 119l6 5M57 155l6 5M64 173l6-7M99 173l6-7M67 166v6M101 166v6" stroke="#fff" stroke-width="1.500"/>
        <text class="cad" transform="translate(54 144) rotate(-90)">S</text>
        <text class="cad" x="79" y="185">S</text>
        <text class="name" x="117" y="204">矩形布置</text>
        <path d="M114 209h88" stroke="#0ff" stroke-width="2"/>
        <path d="M1.500 1.500h301v214H1.500z" stroke="#f00" stroke-width="3"/>
      </svg>
      <svg class="figure" width="304" height="217" viewBox="0 0 304 217" fill="none">
        <path d="M0 0h304v217H0z" fill="#000"/>
        <path d="M67 13v147M84 13v147M101 13v147M117 13v147M134 13v147M151 13v147M168 13v147M185 13v147M201 13v147M218 13v147M235 13v147M252 13v147M269 13v147M67 14h202M67 32h202M67 50h202M67 68h202M67 86h202M67 104h202M67 122h202M67 141h202M67 159h202" stroke="#fff" stroke-width="2" shape-rendering="crispEdges"/>
        <path d="M67 14h203M67 50h203M67 86h203M67 122h203M67 159h203M84 32h170M84 68h170M84 104h170M84 141h170" stroke="#f00" stroke-width="5" stroke-linecap="round" stroke-dasharray="0 33.660"/>
        <path d="M58 122v37M67 169h35M55 119l6 5M55 156l6 5M64 173l6-7M99 173l6-7M67 166v6M101 166v6M217 180v6h3M248 180v6h3" stroke="#fff" stroke-width="1.500"/>
        <text class="cad" x="35" y="147">S2</text>
        <text class="cad" x="73" y="185">S1</text>
        <text class="note" x="146" y="179"><tspan class="note-cn">例：</tspan>A6@200*200</text>
        <text class="note" x="209" y="195">s1</text>
        <text class="note" x="240" y="195">s2</text>
        <text class="name" x="114" y="203">梅花布置</text>
        <path d="M108 209h97" stroke="#0ff" stroke-width="2"/>
      </svg>
    </div>
    <p class="picker-desc">矩形布置,S1 代表水平间距，S2 代表垂直间距。</p>
    <div class="picker-actions"><button class="primary">确定</button><button>取消</button></div>
  </div>
  <svg class="grip" width="8" height="8" viewBox="0 0 8 8" fill="#666"><path d="M6 0h2v2H6zM3 3h2v2H3zM6 3h2v2H6zM0 6h2v2H0zM3 6h2v2H3zM6 6h2v2H6z"/></svg>
</section>

<!-- pen marks -->
<svg class="pen" width="1747" height="980" viewBox="0 0 1747 980">
  <path d="M16 317l9 3 18 2h84"/>
  <path d="M107 531h63l27-4 30-5 12-4"/>
  <path d="M191 934h122l12-3h73"/>
  <path d="M477 645l26-4 46-7 67-1 31-1 35-4 27-3 43-2h46l8-2h70l7-3"/>
  <path d="M1457 501h59l19-2 18-5 23-2 42-8 30-10 20-13v-16l-11-23-18-27-17-14-37-17-27-6h-40l-11 5-12 10-10 15-7 22-1 68 7 22 6 15 12 15 12 9 18 1 10-3 8-6"/>
</svg>
</body>
</html>
```

FILE: styles.css
```css
* {
  box-sizing: border-box;
}

body {
  margin: 0;
  font-family: "Noto Sans", "Noto Sans CJK SC", sans-serif;
  font-size: 12px;
  line-height: 17px;
  color: #000;
  background: #fff;
  position: relative;
  overflow: hidden;
}

button, input, select {
  font: inherit;
  color: inherit;
  background: none;
  border: 0;
  padding: 0;
  margin: 0;
}

a {
  color: inherit;
  text-decoration: none;
}

ul {
  list-style: none;
  margin: 0;
  padding: 0;
}

h1, h2, p {
  margin: 0;
  font-size: 12px;
  font-weight: normal;
}

svg {
  display: block;
  flex: none;
}

.app {
  display: flex;
  flex-direction: column;
  height: 100vh;
}

.caret {
  flex: none;
  border: 3px solid transparent;
  border-top-color: #555;
  border-bottom: 0;
}

.caret.light {
  border-top-color: #aaa;
}

.caret.wide {
  border-width: 4px 4px 0;
}

/* title bar */
.titlebar {
  display: flex;
  height: 41px;
}

.logo {
  width: 33px;
}

.title-main {
  flex: 1;
  border-bottom: 1px solid #d5d5d5;
}

.title-row {
  display: flex;
  height: 21px;
  align-items: center;
}

.quick {
  display: flex;
  gap: 7px;
  padding-left: 8px;
  width: 310px;
}

.quick .with-caret {
  display: flex;
  align-items: center;
  gap: 5px;
  margin-right: -3px;
}

.quick .more {
  padding: 4px 0 0 1px;
}

.title {
  flex: 1;
  text-align: center;
  padding-right: 198px;
  white-space: nowrap;
}

.tab-row {
  display: flex;
  justify-content: space-between;
  height: 19px;
}

.tabs {
  display: flex;
  padding-left: 4px;
  line-height: 21px;
  color: #333;
}

.tabs a {
  padding: 0 13px;
}

.tabs a.active {
  background: #5aa5f6;
  color: #fff;
}

.user-icons {
  display: flex;
  gap: 7px;
  padding-top: 1px;
}

/* ribbon */
.ribbon {
  display: flex;
  height: 98px;
  padding-top: 3px;
  background: linear-gradient(#fff 45%, #e7ebec);
  border-bottom: 1px solid #7f8386;
}

.group {
  background: linear-gradient(#c5c8ca, #c5c8ca) right 0 / 1px 92px no-repeat;
}

.group-body {
  display: flex;
  height: 69px;
}

.group-label {
  display: flex;
  justify-content: center;
  align-items: center;
  gap: 6px;
  height: 26px;
}

.tools {
  display: grid;
  grid-auto-flow: column;
  grid-template-rows: repeat(3, 23px);
  justify-content: start;
}

.tool {
  display: flex;
  align-items: center;
  gap: 4px;
  white-space: nowrap;
}

.tool .caret {
  margin-left: 2px;
}

.big {
  display: flex;
  flex-direction: column;
  align-items: center;
  padding-top: 4px;
  white-space: nowrap;
}

.big svg {
  margin-bottom: 4px;
}

.big .caret {
  margin-top: 6px;
}

.big.active {
  background: #c7d8ee;
}

button:disabled {
  color: #b0b0b0;
}

.g-select {
  width: 146px;
  margin-left: -13px;
}

.g-select .big {
  width: 48px;
  margin: 2px 4px 0 0;
  padding: 2px 5px 0 13px;
}

.g-cad { width: 91px; }
.g-common { width: 276px; }
.g-modify { width: 237px; }
.g-draw { width: 119px; }
.g-identify { width: 162px; }
.g-wall { width: 220px; }

.g-cad .tools,
.g-common .tools,
.g-modify .tools {
  padding-left: 8px;
}

.g-common .tools {
  grid-template-columns: 66px 111px auto;
}

.g-modify .tools {
  grid-template-columns: 54px 54px 54px auto;
}

.g-draw .big {
  width: 52px;
}

.g-draw .big + .big {
  width: 32px;
  margin-right: 8px;
}

.g-identify .big {
  width: 36px;
}

.g-identify .big:first-child {
  width: 68px;
}

.g-identify .big:last-child {
  width: 56px;
}

.g-wall .big {
  width: 60px;
}

.g-wall .tools {
  grid-template-columns: 78px auto;
}

/* floor / component filters */
.filters {
  display: flex;
  gap: 6px;
  height: 29px;
  padding: 3px 0;
  background: #c9ccd1;
  border-bottom: 1px solid #8d9196;
}

.combo {
  display: flex;
  align-items: center;
  width: 99px;
  height: 23px;
  background: #fff;
  border: 1px solid #adadad;
}

.combo:first-child {
  margin-left: -10px;
}

.combo select {
  flex: 1;
  appearance: none;
  padding-left: 4px;
  outline: 0;
}

.combo .caret {
  margin-right: 4px;
}

/* workspace */
.workspace {
  display: flex;
  flex: 1;
  min-height: 0;
}

.navigator {
  width: 157px;
  border-right: 1px solid #c6c8cc;
}

.nav-bar {
  display: flex;
  gap: 4px;
  height: 28px;
  padding: 1px 3px 2px 0;
  background: #f0f0f0;
  border-bottom: 1px solid #c6c8cc;
}

.nav-bar .plus {
  margin: 6px auto 0 0;
}

.nav-bar button {
  display: flex;
  align-items: center;
  justify-content: center;
  width: 25px;
  height: 24px;
  background: #e3f0fd;
  border: 1px solid #5aa5f6;
  border-radius: 3px;
}

.nav-list {
  padding-top: 3px;
}

.nav-list a {
  display: flex;
  align-items: center;
  gap: 5px;
  height: 24px;
}

.nav-list ul a {
  gap: 6px;
  height: 21px;
  margin: 0 0 3px 8px;
  padding-left: 4px;
}

.nav-list ul {
  padding-top: 2px;
  margin-bottom: -2px;
}

.nav-list a.active {
  background: #c7d8ee;
}

.folder {
  width: 7px;
  height: 12px;
  background: linear-gradient(#c98a2b, #c98a2b) 0 5px / 3px 2px no-repeat, #f0c67a;
  border-top: 1px solid #e3ae55;
  border-radius: 0 2px 2px 0;
}

.folder.open {
  background: linear-gradient(200deg, #fff 30%, #f0c67a 32%);
  border-right: 1px solid #e3ae55;
}

.panels {
  display: flex;
  flex-direction: column;
  gap: 4px;
  width: 298px;
  margin-left: 4px;
}

.panel {
  border: 1px solid #c1c4c9;
  border-top: 0;
}

.components {
  height: 331px;
}

.properties {
  display: flex;
  flex-direction: column;
  flex: 1;
  min-height: 0;
  border-bottom: 0;
}

.panel-head {
  display: flex;
  justify-content: flex-end;
  align-items: center;
  flex: none;
  height: 12px;
  padding-right: 5px;
  background: #d2d3d8;
  border-bottom: 1px solid #c1c4c9;
}

.panel-tabs {
  display: flex;
  flex: none;
  height: 22px;
  background: #f0f0f0;
  border-bottom: 1px solid #c1c4c9;
}

.panel-tabs button {
  width: 65px;
  color: #888;
  background: #e1e1e1;
  border-right: 1px solid #c1c4c9;
}

.panel-tabs .active {
  color: #333;
  font-weight: 600;
  background: #f0f0f0;
}

.panel-tools {
  display: flex;
  align-items: center;
  gap: 15px;
  height: 30px;
  padding-left: 4px;
  background: #f0f0f0;
  border-bottom: 1px solid #c1c4c9;
  color: #222;
}

.panel-tools button {
  display: flex;
  align-items: center;
  gap: 3px;
}

.panel-tools button:first-child {
  margin-right: -4px;
}

.panel-tools .caret {
  margin-left: 5px;
}

.panel-tools .overflow {
  margin: 0 2px 0 auto;
}

.search {
  display: flex;
  align-items: center;
  height: 19px;
  padding: 0 6px 0 2px;
  border-bottom: 1px solid #c1c4c9;
}

.search input {
  flex: 1;
  min-width: 0;
  outline: 0;
}

.search input::placeholder {
  color: #777;
}

.tree li {
  height: 21px;
  padding-left: 40px;
  line-height: 21px;
}

.tree .root {
  display: flex;
  align-items: center;
  gap: 8px;
  padding-left: 10px;
}

.tree span {
  display: inline-block;
  width: 67px;
  padding-left: 4px;
}

.tree .active {
  background: #c7d8ee;
}

/* data grids */
.grid {
  border-collapse: collapse;
  table-layout: fixed;
}

.grid th,
.grid td {
  height: 21px;
  padding: 0 0 0 2px;
  border: 1px solid #c1c4c9;
  border-top: 0;
  line-height: 20px;
  white-space: nowrap;
  overflow: hidden;
}

.grid td:last-child {
  padding-left: 3px;
}

.grid th {
  height: 19px;
  padding: 0;
  line-height: 18px;
  font-weight: normal;
  color: #333;
  background: #f0f0f0;
  border-color: #dcdcdc;
  border-left: 0;
  border-right: 0;
}

.grid th.num {
  background: #fff;
  border: 0;
}

.grid th.sel {
  color: #fff;
  font-weight: 600;
  background: #82bbf8;
  border: 1px solid #69a9ec;
}

.grid td.num {
  padding: 0;
  text-align: center;
  color: #444;
  background: #f0f0f0;
  border-left: 0;
  border-bottom-color: #d9d9d9;
}

.grid .current td.num {
  color: #fff;
  font-weight: bold;
  background: #82bbf8;
}

.grid td.edit {
  padding: 0;
}

.edit div {
  display: flex;
  justify-content: space-between;
  align-items: center;
  height: 20px;
  padding: 0 4px 0 4px;
  outline: 2px solid #62a3ea;
  outline-offset: -2px;
}

.props .edit div {
  padding: 0 3px 0 6px;
}

.dots {
  width: 16px;
  height: 14px;
  line-height: 11px;
  font-weight: bold;
  text-align: center;
  color: #3f86dd;
  background: #f4f9ff;
  border: 1px solid #5a9fe8;
  border-radius: 2px;
}

.prop-scroll {
  display: flex;
  flex: 1;
  min-height: 0;
}

.prop-area {
  flex: 1;
  overflow: hidden;
  background: linear-gradient(#f0f0f0, #f0f0f0) 100px 0 / 100% 20px no-repeat;
}

.props {
  width: 262px;
}

.props th.num { width: 22px; }
.props th.sel { width: 139px; }

.grid .link {
  color: #1b52ff;
}

.grid .blank {
  background: #e9e9e9;
}

.grid .parent {
  padding-left: 1px;
}

.toggle {
  width: 14px;
  height: 14px;
  margin-right: 5px;
  line-height: 11px;
  text-align: center;
  vertical-align: middle;
  background: #f4f4f4;
  border: 1px solid #888;
  border-radius: 2px;
}

.grid .child {
  padding-left: 30px;
  background:
    linear-gradient(#b5b8bc, #b5b8bc) 8px 0 / 1px 100% no-repeat,
    linear-gradient(#b5b8bc, #b5b8bc) 9px 10px / 17px 1px no-repeat;
}

.grid .child.last {
  background-size: 1px 10px, 17px 1px;
}

.scrollbar {
  display: flex;
  flex-direction: column;
  align-items: center;
  width: 14px;
  padding-top: 2px;
}

.thumb {
  flex: 1;
  width: 8px;
  margin-top: 177px;
  background: #c8c8c8;
  border-radius: 4px 4px 0 0;
}

.splitter {
  width: 4px;
  padding-top: 372px;
}

.splitter button {
  display: flex;
  align-items: center;
  width: 4px;
  height: 100px;
  background: #5b6670;
}

.canvas {
  flex: 1;
  background: #000;
}

.drawing {
  width: 100%;
  height: 100%;
}

.axis-text {
  font-family: "Liberation Serif", serif;
  font-size: 20px;
  fill: #fff;
}

.dim-text {
  font-family: "DejaVu Sans Mono", monospace;
  font-size: 16px;
  fill: #fff;
}

.ucs {
  font-family: "Liberation Mono", monospace;
  font-size: 16px;
}

/* dialogs */
.dialog {
  position: absolute;
  display: flex;
  flex-direction: column;
  background: #f0f0f0;
  border: 1px solid #b5c3d6;
  border-top: 0;
  box-shadow: 1px 2px 4px rgba(0, 0, 0, 0.4);
}

.dialog header {
  display: flex;
  justify-content: space-between;
  align-items: center;
  flex: none;
  height: 27px;
  margin: 0 -1px;
  padding: 0 9px 0 8px;
  color: #fff;
  background: #2d80e2;
}

.node-settings {
  left: 471px;
  top: 154px;
  width: 963px;
  height: 533px;
}

.node-body {
  display: flex;
  height: 451px;
  margin: 11px 11px 0;
  border: 1px solid #c1c4c9;
  background: #fff;
}

.node-table {
  width: 537px;
}

.nodes {
  width: 534px;
}

.nodes th.num { width: 22px; }
.nodes th.sel { width: 201px; }

.nodes td:nth-child(2) {
  background: #ffffce;
}

.node-preview {
  flex: 1;
  padding-top: 51px;
  background: linear-gradient(#f0f0f0, #f0f0f0) 0 0 / 100% 20px no-repeat;
}

.node-preview fieldset {
  height: 398px;
  min-width: 0;
  margin: 0;
  padding: 5px 0 0 3px;
  background: #f0f0f0;
  border: 1px solid #d4d4d4;
  border-radius: 4px 0 0 0;
}

.node-preview legend {
  float: left;
  width: 100%;
  padding: 0 2px;
  line-height: 19px;
}

.preview {
  clear: both;
  width: 100%;
  height: 330px;
  background: #000;
}

.preview text {
  font-family: "Liberation Serif", serif;
  font-size: 24px;
  fill: #fff;
}

.node-preview p {
  line-height: 30px;
}

.node-picker {
  left: 1060px;
  top: 191px;
  width: 662px;
  height: 596px;
}

.picker-body {
  display: flex;
  flex-direction: column;
  flex: 1;
  padding: 11px;
}

.picker-list {
  display: flex;
  gap: 8px;
  height: 439px;
  padding: 1px;
  border: 1px solid #a0a0a0;
  border-right-color: #fff;
  border-bottom-color: #fff;
  background: linear-gradient(#f4f4f4, #f4f4f4) right / 17px 100% no-repeat;
}

.figure .cad {
  font-family: "Liberation Serif", serif;
  font-size: 20px;
  fill: #fff;
}

.figure .note {
  font-family: "Liberation Mono", "Noto Sans CJK SC", monospace;
  font-size: 13px;
  fill: #fff;
}

.figure .note-cn {
  font-size: 16px;
}

.figure .name {
  font-size: 21px;
  fill: #0ff;
}

.picker-desc {
  flex: 1;
  padding-top: 7px;
}

.picker-actions {
  display: flex;
  justify-content: flex-end;
  gap: 6px;
  padding-top: 7px;
  border-top: 1px solid #c1c4c9;
}

.picker-actions button {
  width: 80px;
  height: 26px;
  text-align: center;
  color: #333;
  background: #fbfbfb;
  border: 1px solid #c1c8d6;
  border-radius: 2px;
}

.picker-actions .primary {
  color: #fff;
  background: #2d80e2;
  border-color: #2d80e2;
}

.grip {
  position: absolute;
  right: 3px;
  bottom: 3px;
}

.pen {
  position: absolute;
  top: 0;
  left: 0;
  fill: none;
  stroke: #fb3937;
  stroke-width: 7px;
  stroke-linecap: round;
  stroke-linejoin: round;
  pointer-events: none;
}
```
